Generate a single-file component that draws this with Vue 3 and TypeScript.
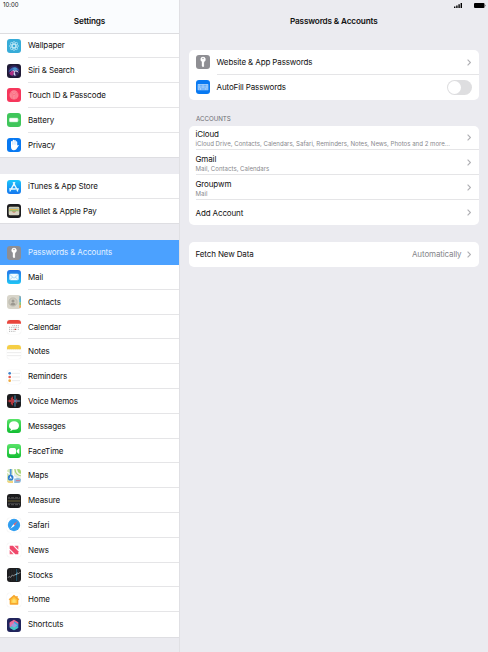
<script setup lang="ts">
import { ref } from 'vue'

interface MenuItem {
  label: string
  icon: string
}

interface Account {
  name: string
  detail?: string
}

const groups: MenuItem[][] = [
  [
    { label: 'Wallpaper', icon: 'wallpaper' },
    { label: 'Siri & Search', icon: 'siri' },
    { label: 'Touch ID & Passcode', icon: 'touch' },
    { label: 'Battery', icon: 'battery' },
    { label: 'Privacy', icon: 'privacy' },
  ],
  [
    { label: 'iTunes & App Store', icon: 'store' },
    { label: 'Wallet & Apple Pay', icon: 'wallet' },
  ],
  [
    { label: 'Passwords & Accounts', icon: 'key' },
    { label: 'Mail', icon: 'mail' },
    { label: 'Contacts', icon: 'contacts' },
    { label: 'Calendar', icon: 'calendar' },
    { label: 'Notes', icon: 'notes' },
    { label: 'Reminders', icon: 'reminders' },
    { label: 'Voice Memos', icon: 'voice' },
    { label: 'Messages', icon: 'messages' },
    { label: 'FaceTime', icon: 'facetime' },
    { label: 'Maps', icon: 'maps' },
    { label: 'Measure', icon: 'measure' },
    { label: 'Safari', icon: 'safari' },
    { label: 'News', icon: 'news' },
    { label: 'Stocks', icon: 'stocks' },
    { label: 'Home', icon: 'home' },
    { label: 'Shortcuts', icon: 'shortcuts' },
  ],
]

const accounts: Account[] = [
  {
    name: 'iCloud',
    detail: 'iCloud Drive, Contacts, Calendars, Safari, Reminders, Notes, News, Photos and 2 more...',
  },
  { name: 'Gmail', detail: 'Mail, Contacts, Calendars' },
  { name: 'Groupwm', detail: 'Mail' },
  { name: 'Add Account' },
]

// glyphs are drawn on a 42 x 42 grid, tile backgrounds live in the css
const glyphs: Record<string, string> = {
  wallpaper:
    '<g fill="none" stroke="#d5f3fc" stroke-width="1.8"><ellipse cx="21" cy="21" rx="5" ry="14"/><ellipse cx="21" cy="21" rx="5" ry="14" transform="rotate(45 21 21)"/><ellipse cx="21" cy="21" rx="5" ry="14" transform="rotate(90 21 21)"/><ellipse cx="21" cy="21" rx="5" ry="14" transform="rotate(135 21 21)"/></g>',
  siri:
    '<circle cx="21" cy="21" r="17" fill="#33265f"/><path d="M5 25C8 9 30 2 37 21 30 17 25 20 21 23 16 17 10 20 5 25z" fill="#3d6cb5"/><path d="M8 27Q18 16 22 20 31 16 35 26 27 21 23 23L26 35Q17 35 20 23z" fill="#ddd3ee"/><path d="M7 28q8-10 14-6l-4 13Q9 35 7 28z" fill="#b02c83"/><path d="M17 14q8-7 14 1l-8 5z" fill="#4a98cd"/>',
  touch:
    '<circle cx="21" cy="21" r="14" fill="#fb6f84"/><g fill="none" stroke="#fda4b0" stroke-width="1.4"><path d="M11 28q-2-15 9-16 12 0 11 16M15 31q-3-15 6-15 8 0 6 15M20 33q-2-12 1-12 4 0 2 12M13 11q8-5 16 0"/></g>',
  battery:
    '<rect x="6" y="14" width="28" height="14" rx="4" fill="#a7e7b4"/><rect x="8" y="16" width="24" height="10" rx="2" fill="#fff"/><path d="M35.500 18q3 3 0 6z" fill="#dff7e4"/>',
  privacy:
    '<path d="M12 22V12q0-3 2.500-3t2.500 3V8q0-3 2.300-3t2.400 3v1q0-3 2.300-3t2.400 3v4q0-3 2.300-3 2 0 2 3v10l2-2q2-1 3 1L28 34q-3 3-8 3-8-1-8-11z" fill="#fff"/><path d="M17 12v8M21.600 9v11M26.300 12v8" stroke="#72b4fa"/>',
  store:
    '<g fill="none" stroke="#e9faff" stroke-width="4" stroke-linecap="round"><path d="M19 8l12 22M23 8L12 28M8 27h17M30 27h4"/><path d="M10 31l-1 2M31 31l1 2"/></g>',
  wallet:
    '<rect x="5" y="8" width="32" height="26" rx="4" fill="#d9d5bd"/><path d="M7 11h28v4H7z" fill="#a8b9aa"/><path d="M7 15h28v4H7z" fill="#e1b852"/><path d="M7 19h28v4H7z" fill="#87b467"/><path d="M7 22h8q6 7 12 0h8v10H7z" fill="#d8d4c4"/><path d="M16 23q5 5 10 0" stroke="#dc6452" stroke-width="2" fill="none"/>',
  key:
    '<path d="M21 5a8 8 0 0 0-3.500 15v13l3.500 4 4-4-2-3 2-3-2-3 2-2v-2A8 8 0 0 0 21 5z" fill="#fff"/><circle cx="21" cy="10.500" r="2" fill="#8e8e93"/>',
  mail:
    '<rect x="7" y="11" width="28" height="20" rx="4" fill="#f2fbff"/><path d="M8 13l11 10q2 2 4 0l11-10M8 30l9-9M34 30l-9-9" fill="none" stroke="#75bbed" stroke-width="1.600"/>',
  contacts:
    '<path d="M37 3h5v11h-5z" fill="#77a8b9"/><path d="M37 11h5v11h-5z" fill="#58b3d2"/><path d="M37 22h5v9h-5z" fill="#8bc474"/><path d="M37 31h5v8h-5z" fill="#efa552"/><circle cx="18" cy="21" r="12.500" fill="#cbc8bd" stroke="#aaa69c" stroke-width="1.500"/><circle cx="18" cy="18" r="4.500" fill="#9b9890"/><path d="M10 28q2-5 8-5t8 5q-8 7-16 0z" fill="#9b9890"/>',
  calendar:
    '<path d="M0 0h42v11H0z" fill="#e9453c"/><g stroke="#8d8d8d" stroke-width="2" stroke-dasharray="3 2.500"><path d="M16 17h20M6 22h30M6 28h30M6 34h19"/></g><path d="M23 28h4" stroke="#e53935" stroke-width="4"/>',
  notes:
    '<path d="M0 0h42v13H0z" fill="#f5ce45"/><path d="M0 14h42" stroke="#c6b77f" stroke-dasharray="1 1"/><path d="M0 23h42M0 32h42" stroke="#d7d7d7" stroke-width="1.500"/>',
  reminders:
    '<circle cx="8" cy="10" r="4" fill="#3f83ca"/><circle cx="8" cy="21" r="4" fill="#e65b50"/><circle cx="8" cy="32" r="4" fill="#f0ad43"/><path d="M15 10h24M15 21h24M15 32h24" stroke="#d6d6d6" stroke-width="1.500"/>',
  voice:
    '<path d="M2 21h3M7 17v8M10 18v6M13 11v20M16 8v26M19 15v12M22 18v6" stroke="#f0434b" stroke-width="2.500"/><path d="M26 18v6M29 14v14M33 18v6M37 20v2" stroke="#b9525e" stroke-width="2.500"/><path d="M24 4v34M22 21h18" stroke="#4dabdd" stroke-width="2.400"/>',
  messages:
    '<path d="M21 7c-9 0-15 5-15 13 0 5 2 8 6 10 0 3-2 4-3 5 4 0 6-1 8-3 12 2 19-4 19-12S30 7 21 7z" fill="#fff"/>',
  facetime:
    '<rect x="6" y="12" width="21" height="19" rx="5" fill="#fff"/><path d="M29 19l6-5q2-1 2 1v13q0 2-2 1l-6-5z" fill="#fff"/>',
  maps:
    '<path d="M0 0h18v42H0z" fill="#d5e7b5"/><path d="M22 0h20v22Q23 20 22 0z" fill="#a8d576"/><path d="M28 0q2 16 14 17" stroke="#f5f7ed" stroke-width="5" fill="none"/><path d="M18 12L42 34v8H18z" fill="#dceaf0"/><path d="M0 9l42 29M19 42V0" stroke="#fff" stroke-width="4"/><path d="M22 30q11-6 20 0v12H22z" fill="#91bde0"/><path d="M27 35h12" stroke="#d77783" stroke-width="3"/><path d="M0 36h18v6H0z" fill="#f4d57d"/><path d="M11 0v22" stroke="#4c94dd" stroke-width="5"/><circle cx="11" cy="26" r="8.500" fill="#317fce"/><path d="M11 20l4 10-4-2-4 2z" fill="#fff"/>',
  measure:
    '<path d="M4 11h35" stroke="#b6b6b6" stroke-width="3" stroke-dasharray="1 3"/><path d="M3 14h36M3 28h36" stroke="#6f6f6f" stroke-width="1.500"/><path d="M2 21h38" stroke="#b09d4d" stroke-width="1.800"/><path d="M4 32h35" stroke="#aaa" stroke-width="4" stroke-dasharray="1 3"/>',
  safari:
    '<circle cx="21" cy="21" r="18.500" fill="#2c9bf0"/><circle cx="21" cy="21" r="16" fill="none" stroke="#83caf5" stroke-width="1.500" stroke-dasharray="1 2"/><path d="M32 9L23 23l-4-4z" fill="#ed6568"/><path d="M10 32l13-9-4-4z" fill="#fff"/>',
  news:
    '<path d="M8 8h10l16 17v9H25L8 17z" fill="#ef476a"/><path d="M22 8h12v12zM8 21l12 13H8z" fill="#f35f7b"/>',
  stocks:
    '<path d="M7 3v36M14 3v36M21 3v36M35 3v36" stroke="#3d3d3f"/><path d="M29 3v36" stroke="#1f88b5" stroke-width="1.800"/><path d="M2 29l5-3 4 2 5-7 4 3 4-5 3 2 4-7 3 4 6-6" fill="none" stroke="#d4d5d7" stroke-width="1.800"/><circle cx="29" cy="19" r="2" fill="#55bfe9"/>',
  home:
    '<path d="M21 5L5 19l3 3v11q0 2 2 2h22q2 0 2-2V22l3-3-5-5V9h-4v2z" fill="#f7a72e"/><path d="M21 11L12 20v10h18V20z" fill="#ffc942"/><path d="M21 17l-5 5v7h10v-7z" fill="#ffe070"/>',
  shortcuts:
    '<path d="M21 5l13 8v6L21 27 8 19v-6z" fill="#f0618a"/><path d="M8 18l13-8 13 8v11L21 37 8 29z" fill="#38a9dc"/><path d="M8 15l13-8v18L8 27z" fill="#e66fa0"/><path d="M21 21l13 8-13 8-13-8z" fill="#46c7c1"/><path d="M21 15l10 7-10 7-9-7z" fill="#9b9ae0"/>',
  keyboard:
    '<rect x="5" y="12" width="32" height="19" rx="2" fill="#a5d0fc"/><path d="M8 16h27M8 21h27" stroke="#1781f6" stroke-width="2.200" stroke-dasharray="2 2"/><path d="M8 27h4M15 27h13M31 27h4" stroke="#1781f6" stroke-width="1.800"/>',
}

const selected = ref('Passwords & Accounts')
const autoFill = ref(false)
</script>

<template>
  <div class="screen">
    <aside class="sidebar">
      <header class="sidebar-header">
        <div class="time">10:00</div>
        <h1 class="title">Settings</h1>
      </header>
      <nav class="menu">
        <ul v-for="(group, index) in groups" :key="index" class="menu-group">
          <li
            v-for="item in group"
            :key="item.label"
            class="menu-item"
            :class="{ active: item.label === selected }"
            @click="selected = item.label"
          >
            <svg class="icon" :class="item.icon" viewBox="0 0 42 42" v-html="glyphs[item.icon]"></svg>
            <span class="label">{{ item.label }}</span>
          </li>
        </ul>
      </nav>
    </aside>

    <main class="content">
      <header class="content-header">
        <div class="status">
          <svg class="signal" viewBox="0 0 8 5">
            <path d="M0 3.500h1.400V5H0zM2.200 2.500h1.400V5H2.200zM4.400 1.300h1.400V5H4.400zM6.600 0H8v5H6.600z" />
          </svg>
          <svg class="power" viewBox="0 0 12 5">
            <rect width="10.500" height="5" rx="1" />
            <path d="M11 1.600q1 .9 0 1.800z" />
          </svg>
        </div>
        <h1 class="title">Passwords &amp; Accounts</h1>
      </header>

      <section class="card passwords">
        <div class="row">
          <svg class="icon key" viewBox="0 0 42 42" v-html="glyphs.key"></svg>
          <div class="row-body">
            <span>Website &amp; App Passwords</span>
            <svg class="chevron" viewBox="0 0 4 7"><path d="M.6.6l2.800 2.900L.6 6.400" /></svg>
          </div>
        </div>
        <div class="row">
          <svg class="icon keyboard" viewBox="0 0 42 42" v-html="glyphs.keyboard"></svg>
          <div class="row-body">
            <span>AutoFill Passwords</span>
            <button class="switch" :class="{ on: autoFill }" @click="autoFill = !autoFill"></button>
          </div>
        </div>
      </section>

      <h2 class="section-title">ACCOUNTS</h2>
      <section class="card">
        <div v-for="account in accounts" :key="account.name" class="row">
          <div class="row-body">
            <div class="account">
              <div class="account-name">{{ account.name }}</div>
              <div v-if="account.detail" class="account-detail">{{ account.detail }}</div>
            </div>
            <svg class="chevron" viewBox="0 0 4 7"><path d="M.6.6l2.800 2.900L.6 6.400" /></svg>
          </div>
        </div>
      </section>

      <section class="card fetch">
        <div class="row">
          <div class="row-body">
            <span>Fetch New Data</span>
            <span class="value">Automatically</span>
            <svg class="chevron" viewBox="0 0 4 7"><path d="M.6.6l2.800 2.900L.6 6.400" /></svg>
          </div>
        </div>
      </section>
    </main>
  </div>
</template>

<style>
body {
  margin: 0;
  overflow: hidden;
}
</style>

<style scoped>
.screen {
  display: flex;
  width: 488px;
  height: 652px;
  overflow: hidden;
  background: #ebebf0;
  color: #111;
  font-family: Inter, "Liberation Sans", sans-serif;
  font-size: 8px;
  line-height: 10px;
  letter-spacing: -0.130px;
}

.sidebar {
  box-sizing: border-box;
  width: 180px;
  flex: none;
  border-right: 1px solid #e0e0e4;
}

.sidebar-header {
  position: relative;
  z-index: 1;
  box-sizing: border-box;
  height: 34px;
  background: #fafcfe;
  border-bottom: 1px solid #dddde0;
}

.time {
  height: 10px;
  padding-left: 3px;
  font-size: 6px;
  line-height: 10px;
  letter-spacing: 0;
}

.title {
  margin: 0;
  padding-top: 6px;
  font-size: 8.200px;
  line-height: 11px;
  font-weight: 600;
  text-align: center;
  letter-spacing: -0.150px;
}

.menu {
  display: flex;
  flex-direction: column;
  gap: 17px;
  margin-top: -0.700px;
}

.menu-group {
  margin: 0;
  padding: 0;
  list-style: none;
  background: #fff;
  box-shadow: 0 1px 0 #dedee2;
}

.menu-item {
  display: flex;
  align-items: center;
  height: 24.800px;
  padding-left: 7px;
  cursor: pointer;
}

.menu-group:nth-child(2) .menu-item {
  height: 24.500px;
}

.label {
  box-sizing: border-box;
  flex: 1;
  height: 100%;
  margin-left: 7px;
  line-height: 24.800px;
  border-bottom: 1px solid #e5e5e7;
}

.menu-group:nth-child(n + 2) .label {
  line-height: 25.800px;
}

.menu-item:last-child .label {
  border-bottom: 0;
}

.menu-item.active {
  background: #4ba1ff;
  color: #e4f1ff;
}

.menu-item.active .label {
  border-color: transparent;
}

.icon {
  width: 14px;
  height: 14px;
  flex: none;
  border-radius: 3px;
  overflow: hidden;
}

.wallpaper { background: #37acd8; }
.siri { background: #1f1b36; }
.touch { background: #f6375c; }
.battery { background: #3fc65b; }
.privacy { background: #0879f2; }
.store { background: linear-gradient(#1ac5fa, #1677ee); }
.wallet { background: #1c1c1e; }
.key { background: #8e8e93; }
.mail { background: linear-gradient(#2471e8, #1fc5f5); }
.contacts { background: #d8d5ca; }
.voice,
.measure,
.stocks { background: #1c1c1e; }
.messages,
.facetime { background: linear-gradient(#5ae469, #12bd32); }
.maps { background: #edf0e3; }
.shortcuts { background: #20245c; }
.keyboard { background: #0879f2; }
.calendar,
.notes,
.reminders,
.safari,
.news,
.home {
  background: #fff;
  box-shadow: 0 0 1px #ddd;
}

.content {
  flex: 1;
  padding: 0 9.500px 0 9px;
}

.content-header {
  height: 50px;
}

.status {
  display: flex;
  align-items: center;
  justify-content: flex-end;
  gap: 12px;
  height: 10px;
  margin-right: -7px;
}

.signal {
  width: 8px;
  height: 5px;
}

.power {
  width: 12px;
  height: 5px;
}

.card {
  border-radius: 5px;
  background: #fff;
  overflow: hidden;
}

.row {
  display: flex;
  align-items: center;
  height: 24.800px;
  padding-left: 6.500px;
}

.row .icon {
  margin-right: 7px;
}

.row-body {
  box-sizing: border-box;
  display: flex;
  flex: 1;
  align-items: center;
  height: 100%;
  padding: 1px 8px 0 0;
  border-bottom: 1px solid #e5e5e7;
}

.row:last-child .row-body {
  padding-top: 0;
  border-bottom: 0;
}

.chevron {
  width: 4px;
  height: 7px;
  margin-left: auto;
}

.chevron path {
  fill: none;
  stroke: #b0b0b4;
  stroke-width: 1.100;
}

.switch {
  width: 25px;
  height: 15px;
  margin: 0 -1px 0 auto;
  padding: 1px;
  border: 0;
  border-radius: 8px;
  background: #dedee0;
}

.switch::before {
  content: "";
  display: block;
  width: 13px;
  height: 13px;
  border-radius: 50%;
  background: #fff;
}

.switch.on {
  background: #34c759;
}

.switch.on::before {
  margin-left: auto;
}

.section-title {
  margin: 0;
  padding: 15px 0 3px 7px;
  color: #6d6d72;
  font-size: 6.200px;
  line-height: 8px;
  font-weight: 400;
  letter-spacing: -0.050px;
}

.account {
  padding-top: 1px;
}

.account-detail {
  color: #88888d;
  font-size: 6.100px;
  line-height: 9px;
  letter-spacing: 0;
  white-space: nowrap;
}

.fetch {
  margin-top: 17px;
}

.value {
  margin-left: auto;
  color: #85858a;
}

.value + .chevron {
  margin-left: 5px;
}
</style>
